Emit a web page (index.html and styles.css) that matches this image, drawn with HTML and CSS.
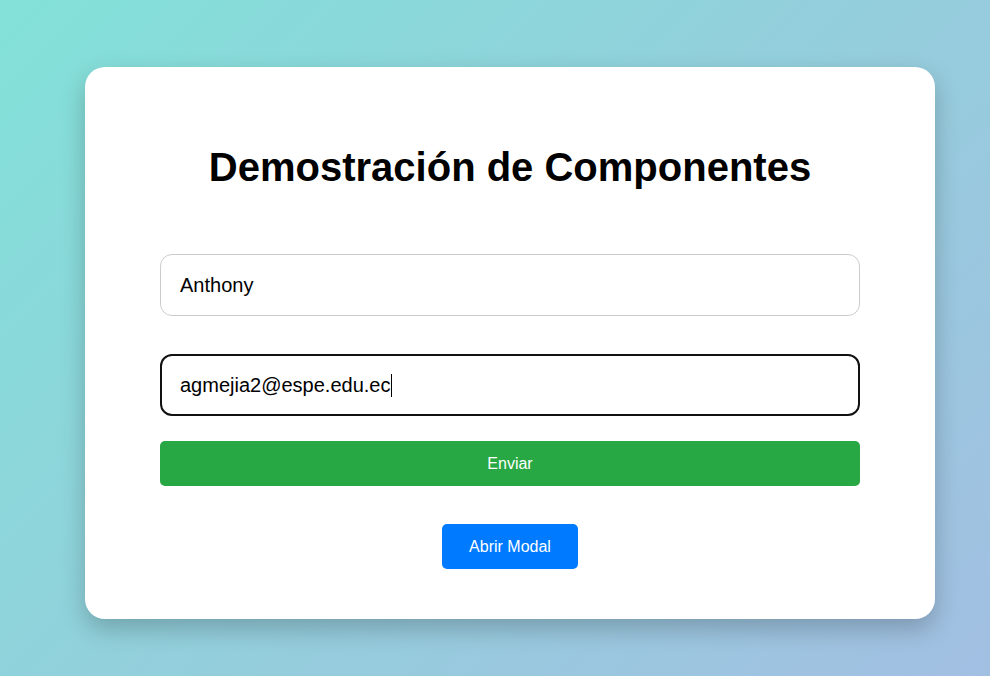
FILE: index.html
```html
<!DOCTYPE html>
<html lang="es">
<head>
<meta charset="utf-8">
<title>Demostración de Componentes</title>
<link rel="stylesheet" href="styles.css">
</head>
<body>
<div class="card">
  <h1 class="title">Demostración de Componentes</h1>
  <form class="form">
    <div class="field">Anthony</div>
    <div class="field field-focus">agmejia2@espe.edu.ec<span class="caret"></span></div>
    <button type="button" class="btn btn-send">Enviar</button>
  </form>
  <div class="modal-row">
    <button type="button" class="btn btn-modal">Abrir Modal</button>
  </div>
</div>
</body>
</html>
```
FILE: styles.css
```css
html, body {
  margin: 0;
  height: 100%;
}
body {
  font-family: "Liberation Sans", Arial, sans-serif;
  background: linear-gradient(135deg, #82e1d8 0%, #93cfdc 50%, #a2bfe2 100%);
  padding: 67px 0 0 85px;
  box-sizing: border-box;
  overflow: hidden;
}
.card {
  width: 850px;
  height: 552px;
  box-sizing: border-box;
  background: #fff;
  border-radius: 20px;
  box-shadow: 0 10px 25px rgba(0, 0, 0, 0.22);
  padding: 0 75px;
  display: flex;
  flex-direction: column;
}
.title {
  margin: 77px 0 0;
  font-size: 40px;
  font-weight: bold;
  text-align: center;
  color: #000;
  line-height: 46px;
}
.form {
  margin-top: 64px;
  display: flex;
  flex-direction: column;
}
.field {
  height: 62px;
  box-sizing: border-box;
  border: 1px solid #ccc;
  border-radius: 12px;
  padding: 0 19px;
  display: flex;
  align-items: center;
  font-size: 20px;
  color: #000;
  margin-bottom: 38px;
}
.field-focus {
  border: 2px solid #111;
  padding: 0 18px;
  margin-bottom: 25px;
}
.caret {
  display: inline-block;
  width: 1px;
  height: 23px;
  background: #000;
  margin-left: 1px;
}
.btn {
  font-family: "Liberation Sans", Arial, sans-serif;
  font-size: 16px;
  color: #fff;
  border: none;
  border-radius: 5px;
  height: 45px;
  cursor: pointer;
}
.btn-send {
  background: #28a745;
  width: 100%;
}
.modal-row {
  margin-top: 38px;
  display: flex;
  justify-content: center;
}
.btn-modal {
  background: #007bff;
  width: 136px;
}
```
